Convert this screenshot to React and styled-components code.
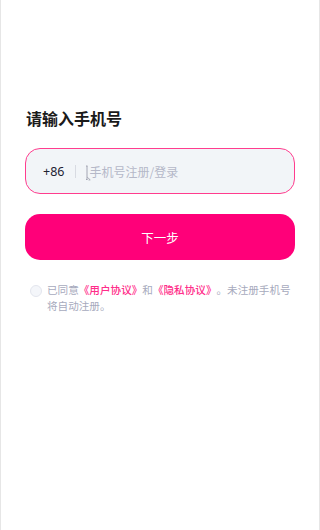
import React from "react";
import styled, { createGlobalStyle } from "styled-components";

const GlobalStyle = createGlobalStyle`
  html, body {
    margin: 0;
    padding: 0;
    background: #ffffff;
  }
  body {
    font-family: "Noto Sans CJK SC", "Noto Sans", sans-serif;
  }
`;

const TextCursor = () => (
  <S.CursorIcon viewBox="0 0 7 16" width="7" height="16">
    <path d="M1 1h1.5M2 1v13.5M1 14.5h1.5" stroke="#9a9dab" strokeWidth="0.9" fill="none" />
    <path d="M2.2 12.2l3 2.6-1.6 0.3" stroke="#9a9dab" strokeWidth="0.8" fill="none" />
  </S.CursorIcon>
);

const App = () => {
  const [agreed, setAgreed] = React.useState(false);

  return (
    <S.Page>
      <GlobalStyle />
      <S.Title>请输入手机号</S.Title>
      <S.InputBox>
        <S.Prefix>+86</S.Prefix>
        <S.Divider />
        <TextCursor />
        <S.Input placeholder="手机号注册/登录" />
      </S.InputBox>
      <S.Button type="button">下一步</S.Button>
      <S.Agreement>
        <S.Check $on={agreed} onClick={() => setAgreed(!agreed)} />
        <S.AgreeText>
          已同意<S.Link>《用户协议》</S.Link>和<S.Link>《隐私协议》</S.Link>。未注册手机号将自动注册。
        </S.AgreeText>
      </S.Agreement>
    </S.Page>
  );
};

export default App;

const S = {};

S.Page = styled.div`
  box-sizing: border-box;
  height: 530px;
  border-left: 1px solid #e6e6e6;
  border-right: 1px solid #e6e6e6;
  padding: 105px 24px 0 24px;
  display: flex;
  flex-direction: column;
`;

S.Title = styled.div`
  font-size: 16px;
  font-weight: 700;
  color: #1a1a1a;
  line-height: 26px;
  padding-left: 1px;
`;

S.InputBox = styled.div`
  box-sizing: border-box;
  margin-top: 17px;
  height: 46px;
  border: 1px solid #ff3d8e;
  border-radius: 15px;
  background: #f2f5f8;
  display: flex;
  align-items: center;
  padding-left: 17px;
`;

S.Prefix = styled.span`
  font-family: "Noto Sans", sans-serif;
  font-size: 12.5px;
  color: #1e2233;
`;

S.Divider = styled.span`
  width: 1px;
  height: 13px;
  background: #d8dbe2;
  margin: 0 9px 0 11px;
`;

S.CursorIcon = styled.svg`
  flex-shrink: 0;
  margin-top: 3px;
  margin-right: -3px;
`;

S.Input = styled.input`
  flex: 1;
  border: none;
  outline: none;
  background: transparent;
  font-family: "Noto Sans CJK SC", sans-serif;
  font-size: 12px;
  color: #1e2233;
  padding: 0;
  &::placeholder {
    color: #b5b8c8;
  }
`;

S.Button = styled.button`
  margin-top: 20px;
  height: 46px;
  border: none;
  border-radius: 15px;
  background: #ff0079;
  color: #ffffff;
  font-family: "Noto Sans CJK SC", sans-serif;
  font-size: 12.5px;
`;

S.Agreement = styled.div`
  margin-top: 22px;
  display: flex;
  align-items: flex-start;
  padding-left: 5px;
`;

S.Check = styled.span`
  flex-shrink: 0;
  box-sizing: border-box;
  width: 12px;
  height: 12px;
  margin-top: 3px;
  margin-right: 5px;
  border-radius: 50%;
  border: 1px solid #e3e6ee;
  background: ${(props) => (props.$on ? "#ff0079" : "#f4f6fa")};
`;

S.AgreeText = styled.div`
  font-size: 10.6px;
  line-height: 16px;
  color: #a7aabd;
  text-spacing-trim: space-all;
`;

S.Link = styled.span`
  color: #ff2d8a;
  font-weight: 500;
`;
